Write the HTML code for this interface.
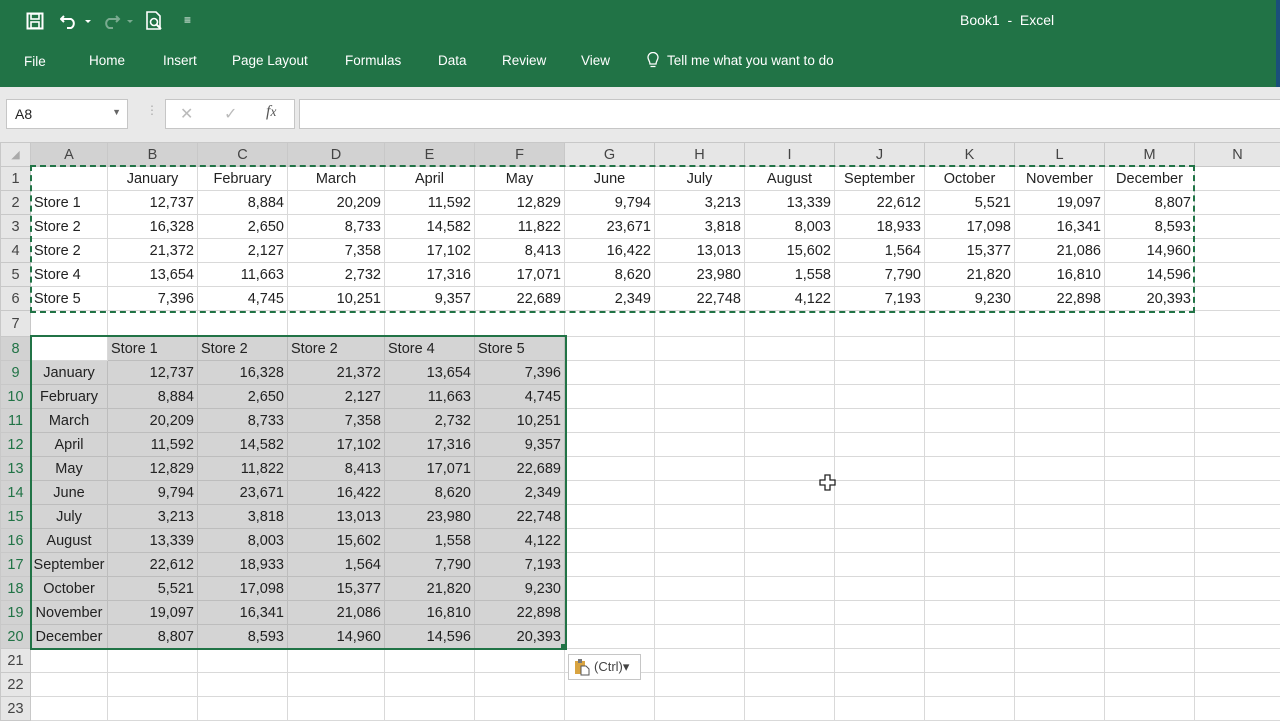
<!DOCTYPE html>
<html><head><meta charset="utf-8"><style>
body{margin:0;width:1280px;height:720px;overflow:hidden;background:#fff;font-family:"Liberation Sans",sans-serif;position:relative}
.top{position:absolute;left:0;top:0;width:1280px;height:87px;background:#217346;color:#fff}
.tab{position:absolute;top:53px;font-size:13.5px}
.fbar{position:absolute;left:0;top:87px;width:1280px;height:55px;background:#e9e9e9}
.box{position:absolute;background:#fff;border:1px solid #c6c6c6}
table{position:absolute;left:0;top:142px;width:1280px;border-collapse:collapse;table-layout:fixed;font-size:14.5px;color:#222}
td{border:1px solid #d9d9d9;height:23px;padding:0 3px;white-space:nowrap;overflow:hidden;text-align:right}
tr.h td{background:#e6e6e6;text-align:center;color:#444;border-color:#c8c8c8}
td.r{background:#e6e6e6;text-align:center;color:#444;border-color:#c8c8c8;padding:0}
td.rs{background:#d2d2d2;color:#217346}
td.cs{background:#d2d2d2 !important}
td.c{text-align:center}td.l{text-align:left}
tr.s td.g{background:#d4d4d4;border-color:#bdbdbd}
</style></head><body>
<div class="top">
<svg style="position:absolute;left:26px;top:12px" width="18" height="18" viewBox="0 0 18 18"><rect x="1.5" y="1.5" width="15" height="15" fill="none" stroke="#fff" stroke-width="2"/><rect x="5" y="2" width="8" height="5" fill="none" stroke="#fff" stroke-width="1.6"/><rect x="5" y="10" width="8" height="6" fill="none" stroke="#fff" stroke-width="1.6"/></svg>
<svg style="position:absolute;left:60px;top:12px" width="34" height="18" viewBox="0 0 34 18"><path d="M4 4 L1 7 L4 10 M1 7 H11 A5 5 0 0 1 11 16 H7" fill="none" stroke="#fff" stroke-width="2"/><path d="M25 8 l3 3 l3 -3z" fill="#fff"/></svg>
<svg style="position:absolute;left:102px;top:12px" width="34" height="18" viewBox="0 0 34 18" opacity=".4"><path d="M14 4 L17 7 L14 10 M17 7 H7 A5 5 0 0 0 7 16 H11" fill="none" stroke="#fff" stroke-width="2"/><path d="M25 8 l3 3 l3 -3z" fill="#fff"/></svg>
<svg style="position:absolute;left:145px;top:11px" width="20" height="20" viewBox="0 0 20 20"><path d="M2 1 H11 L15 5 V18 H2Z" fill="none" stroke="#fff" stroke-width="1.6"/><circle cx="9" cy="11" r="3.5" fill="none" stroke="#fff" stroke-width="1.6"/><path d="M11.5 13.5 L16 18" stroke="#fff" stroke-width="2"/></svg>
<div style="position:absolute;left:184px;top:13px;font-size:12px">&#8801;</div>
<div style="position:absolute;left:960px;top:12px;font-size:14px">Book1 &nbsp;- &nbsp;Excel</div>
<div class="tab" style="left:24px;top:54px">File</div>
<div class="tab" style="left:89px">Home</div>
<div class="tab" style="left:163px">Insert</div>
<div class="tab" style="left:232px">Page Layout</div>
<div class="tab" style="left:345px">Formulas</div>
<div class="tab" style="left:438px">Data</div>
<div class="tab" style="left:502px">Review</div>
<div class="tab" style="left:581px">View</div>
<svg style="position:absolute;left:646px;top:52px" width="14" height="18" viewBox="0 0 14 18"><path d="M4 12 C4 9 2 8 2 5.5 A5 5 0 0 1 12 5.5 C12 8 10 9 10 12 Z M4.5 14.5 H9.5" fill="none" stroke="#fff" stroke-width="1.3"/></svg>
<div class="tab" style="left:667px">Tell me what you want to do</div>
<div style="position:absolute;left:1276px;top:0;width:4px;height:87px;background:#1a4f7a"></div>
</div>
<div class="fbar">
<div class="box" style="left:6px;top:12px;width:120px;height:28px"><span style="position:absolute;left:8px;top:6px;font-size:14px;color:#222">A8</span><span style="position:absolute;right:6px;top:7px;font-size:9px;color:#666">&#9660;</span></div>
<div style="position:absolute;left:146px;top:16px;color:#aaa;font-size:12px">&#8942;</div>
<div class="box" style="left:165px;top:12px;width:128px;height:28px;color:#bbb;font-size:16px"><span style="position:absolute;left:14px;top:4px">&#10005;</span><span style="position:absolute;left:58px;top:4px">&#10003;</span><span style="position:absolute;left:100px;top:3px;color:#555;font-style:italic;font-family:'Liberation Serif',serif">f<small>x</small></span></div>
<div class="box" style="left:299px;top:12px;width:990px;height:28px"></div>
</div>
<table>
<colgroup><col style="width:30px"><col style="width:77px"><col style="width:90px"><col style="width:90px"><col style="width:97px"><col style="width:90px"><col style="width:90px"><col style="width:90px"><col style="width:90px"><col style="width:90px"><col style="width:90px"><col style="width:90px"><col style="width:90px"><col style="width:90px"><col style="width:86px"></colgroup>
<tr class="h"><td style="font-size:11px;color:#aaa">&#9698;</td><td class="cs">A</td><td class="cs">B</td><td class="cs">C</td><td class="cs">D</td><td class="cs">E</td><td class="cs">F</td><td>G</td><td>H</td><td>I</td><td>J</td><td>K</td><td>L</td><td>M</td><td>N</td></tr>
<tr><td class="r">1</td><td></td><td class="c">January</td><td class="c">February</td><td class="c">March</td><td class="c">April</td><td class="c">May</td><td class="c">June</td><td class="c">July</td><td class="c">August</td><td class="c">September</td><td class="c">October</td><td class="c">November</td><td class="c">December</td><td></td></tr>
<tr><td class="r">2</td><td class="l">Store 1</td><td>12,737</td><td>8,884</td><td>20,209</td><td>11,592</td><td>12,829</td><td>9,794</td><td>3,213</td><td>13,339</td><td>22,612</td><td>5,521</td><td>19,097</td><td>8,807</td><td></td></tr>
<tr><td class="r">3</td><td class="l">Store 2</td><td>16,328</td><td>2,650</td><td>8,733</td><td>14,582</td><td>11,822</td><td>23,671</td><td>3,818</td><td>8,003</td><td>18,933</td><td>17,098</td><td>16,341</td><td>8,593</td><td></td></tr>
<tr><td class="r">4</td><td class="l">Store 2</td><td>21,372</td><td>2,127</td><td>7,358</td><td>17,102</td><td>8,413</td><td>16,422</td><td>13,013</td><td>15,602</td><td>1,564</td><td>15,377</td><td>21,086</td><td>14,960</td><td></td></tr>
<tr><td class="r">5</td><td class="l">Store 4</td><td>13,654</td><td>11,663</td><td>2,732</td><td>17,316</td><td>17,071</td><td>8,620</td><td>23,980</td><td>1,558</td><td>7,790</td><td>21,820</td><td>16,810</td><td>14,596</td><td></td></tr>
<tr><td class="r">6</td><td class="l">Store 5</td><td>7,396</td><td>4,745</td><td>10,251</td><td>9,357</td><td>22,689</td><td>2,349</td><td>22,748</td><td>4,122</td><td>7,193</td><td>9,230</td><td>22,898</td><td>20,393</td><td></td></tr>
<tr><td class="r" style="height:25px">7</td><td></td><td></td><td></td><td></td><td></td><td></td><td></td><td></td><td></td><td></td><td></td><td></td><td></td><td></td></tr>
<tr class="s"><td class="r rs">8</td><td></td><td class="g l">Store 1</td><td class="g l">Store 2</td><td class="g l">Store 2</td><td class="g l">Store 4</td><td class="g l">Store 5</td><td></td><td></td><td></td><td></td><td></td><td></td><td></td><td></td></tr>
<tr class="s"><td class="r rs">9</td><td class="g c">January</td><td class="g">12,737</td><td class="g">16,328</td><td class="g">21,372</td><td class="g">13,654</td><td class="g">7,396</td><td></td><td></td><td></td><td></td><td></td><td></td><td></td><td></td></tr>
<tr class="s"><td class="r rs">10</td><td class="g c">February</td><td class="g">8,884</td><td class="g">2,650</td><td class="g">2,127</td><td class="g">11,663</td><td class="g">4,745</td><td></td><td></td><td></td><td></td><td></td><td></td><td></td><td></td></tr>
<tr class="s"><td class="r rs">11</td><td class="g c">March</td><td class="g">20,209</td><td class="g">8,733</td><td class="g">7,358</td><td class="g">2,732</td><td class="g">10,251</td><td></td><td></td><td></td><td></td><td></td><td></td><td></td><td></td></tr>
<tr class="s"><td class="r rs">12</td><td class="g c">April</td><td class="g">11,592</td><td class="g">14,582</td><td class="g">17,102</td><td class="g">17,316</td><td class="g">9,357</td><td></td><td></td><td></td><td></td><td></td><td></td><td></td><td></td></tr>
<tr class="s"><td class="r rs">13</td><td class="g c">May</td><td class="g">12,829</td><td class="g">11,822</td><td class="g">8,413</td><td class="g">17,071</td><td class="g">22,689</td><td></td><td></td><td></td><td></td><td></td><td></td><td></td><td></td></tr>
<tr class="s"><td class="r rs">14</td><td class="g c">June</td><td class="g">9,794</td><td class="g">23,671</td><td class="g">16,422</td><td class="g">8,620</td><td class="g">2,349</td><td></td><td></td><td></td><td></td><td></td><td></td><td></td><td></td></tr>
<tr class="s"><td class="r rs">15</td><td class="g c">July</td><td class="g">3,213</td><td class="g">3,818</td><td class="g">13,013</td><td class="g">23,980</td><td class="g">22,748</td><td></td><td></td><td></td><td></td><td></td><td></td><td></td><td></td></tr>
<tr class="s"><td class="r rs">16</td><td class="g c">August</td><td class="g">13,339</td><td class="g">8,003</td><td class="g">15,602</td><td class="g">1,558</td><td class="g">4,122</td><td></td><td></td><td></td><td></td><td></td><td></td><td></td><td></td></tr>
<tr class="s"><td class="r rs">17</td><td class="g c" style="padding:0">September</td><td class="g">22,612</td><td class="g">18,933</td><td class="g">1,564</td><td class="g">7,790</td><td class="g">7,193</td><td></td><td></td><td></td><td></td><td></td><td></td><td></td><td></td></tr>
<tr class="s"><td class="r rs">18</td><td class="g c">October</td><td class="g">5,521</td><td class="g">17,098</td><td class="g">15,377</td><td class="g">21,820</td><td class="g">9,230</td><td></td><td></td><td></td><td></td><td></td><td></td><td></td><td></td></tr>
<tr class="s"><td class="r rs">19</td><td class="g c" style="padding:0">November</td><td class="g">19,097</td><td class="g">16,341</td><td class="g">21,086</td><td class="g">16,810</td><td class="g">22,898</td><td></td><td></td><td></td><td></td><td></td><td></td><td></td><td></td></tr>
<tr class="s"><td class="r rs">20</td><td class="g c" style="padding:0">December</td><td class="g">8,807</td><td class="g">8,593</td><td class="g">14,960</td><td class="g">14,596</td><td class="g">20,393</td><td></td><td></td><td></td><td></td><td></td><td></td><td></td><td></td></tr>
<tr><td class="r">21</td><td></td><td></td><td></td><td></td><td></td><td></td><td></td><td></td><td></td><td></td><td></td><td></td><td></td><td></td></tr>
<tr><td class="r">22</td><td></td><td></td><td></td><td></td><td></td><td></td><td></td><td></td><td></td><td></td><td></td><td></td><td></td><td></td></tr>
<tr><td class="r">23</td><td></td><td></td><td></td><td></td><td></td><td></td><td></td><td></td><td></td><td></td><td></td><td></td><td></td><td></td></tr>
</table>
<div style="position:absolute;left:30px;top:165px;width:1161px;height:144px;border:2px dashed #217346"></div>
<div style="position:absolute;left:30px;top:335px;width:533px;height:311px;border:2px solid #217346"></div>
<div style="position:absolute;left:561px;top:644px;width:6px;height:6px;background:#217346"></div>
<div style="position:absolute;left:568px;top:654px;width:71px;height:24px;background:#fff;border:1px solid #c6c6c6;font-size:13px;color:#444">
<svg style="position:absolute;left:4px;top:3px" width="18" height="18" viewBox="0 0 18 18"><rect x="2" y="3" width="10" height="13" fill="#d9a441"/><rect x="5" y="1" width="4" height="4" fill="#777"/><path d="M8 8 H13 L16 11 V17 H8Z" fill="#fff" stroke="#555"/></svg>
<span style="position:absolute;left:25px;top:4px">(Ctrl)&#9662;</span></div>
<svg style="position:absolute;left:819px;top:474px" width="18" height="18" viewBox="0 0 18 18"><path d="M6 1 H11 V6 H16 V11 H11 V16 H6 V11 H1 V6 H6 Z" fill="#fff" stroke="#222" stroke-width="1.3"/></svg>
</body></html>
